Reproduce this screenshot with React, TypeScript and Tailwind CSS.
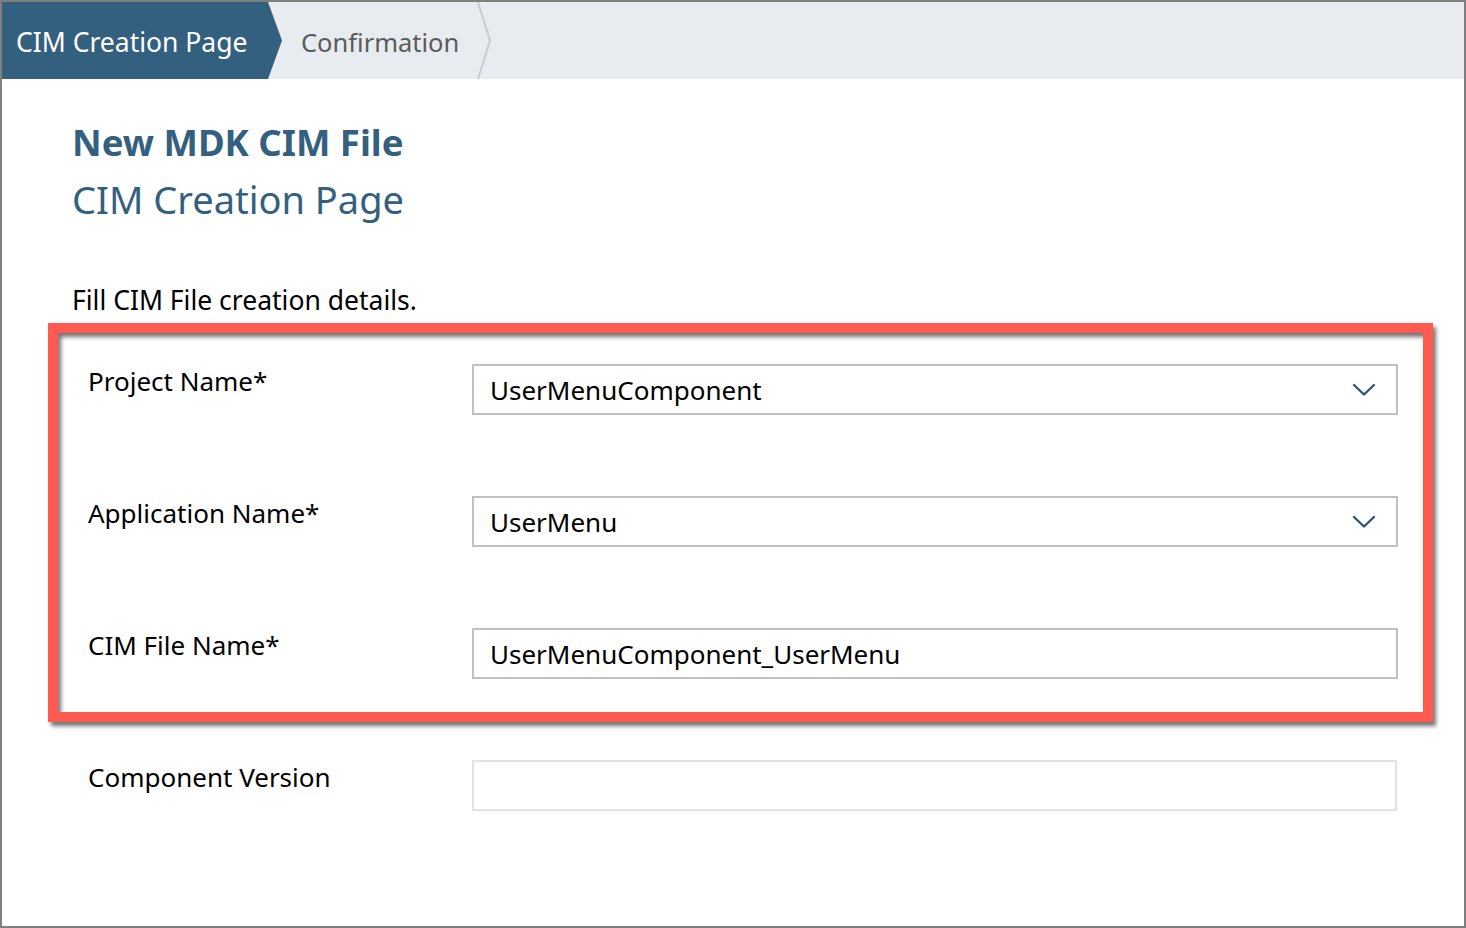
import React from 'react'

const fontStack = { fontFamily: '"Noto Sans", "Liberation Sans", sans-serif' }

function Chevron() {
  return (
    <svg width="24" height="14" viewBox="0 0 24 14" fill="none" className="shrink-0">
      <path d="M2 2 L12 11.5 L22 2" stroke="#2c5578" strokeWidth="2.4" strokeLinecap="round" strokeLinejoin="round" />
    </svg>
  )
}

interface FieldProps {
  label: string;
  value?: string;
  select?: boolean;
  muted?: boolean;
}

function Field({ label, value = '', select = false, muted = false }: FieldProps) {
  return (
    <div className="grid grid-cols-[384px_1fr]">
      <div className="pt-[2px] text-[26px] leading-[30px] text-black">{label}</div>
      <div
        className={
          muted
            ? 'flex h-[51px] items-center border-2 border-[#e2e2e2] bg-white pl-[16px] pr-[20px]'
            : 'flex h-[51px] items-center border-2 border-[#c0c0c0] bg-white pl-[16px] pr-[20px]'
        }
      >
        <span className="flex-1 text-[26px] leading-none text-black">{value}</span>
        {select && <Chevron />}
      </div>
    </div>
  )
}

export default function App() {
  return (
    <div className="h-[928px] w-[1466px] overflow-hidden border-2 border-[#7f7f7f] bg-white" style={fontStack}>
      <div className="flex h-[77px] bg-[#e8ecf0]">
        <div className="flex w-[280px] items-center bg-[#346080] pt-[4px] pl-[14px] text-[26.5px] text-white [clip-path:polygon(0_0,266px_0,100%_50%,266px_100%,0_100%)]">
          CIM Creation Page
        </div>
        <div className="flex items-center pt-[4px] pl-[19px] text-[25.5px] text-[#5b5b5b]">Confirmation</div>
        <svg width="20" height="77" viewBox="0 0 20 77" className="ml-[16px]">
          <path d="M3 0 L15 38.5 L3 77" stroke="#c6ccd2" strokeWidth="2" fill="none" />
        </svg>
      </div>

      <div className="pt-[34px]">
        <div className="pl-[70px] text-[#346080]">
          <h1 className="text-[36.5px] font-bold leading-[58px]">New MDK CIM File</h1>
          <h2 className="-mt-[1px] text-[38px] leading-[58px]">CIM Creation Page</h2>
        </div>
        <p className="mt-[57px] pl-[70px] text-[26.5px] leading-[30px] text-black">Fill CIM File creation details.</p>

        <div className="mt-[8px] ml-[46px] w-[1385px] border-[10px] border-[#ff5a4f] pt-[31px] pr-[25px] pb-[33px] pl-[30px] shadow-[3px_4px_4px_rgba(0,0,0,0.55),inset_3px_4px_4px_rgba(0,0,0,0.55)]">
          <div className="flex flex-col gap-[81px]">
            <Field label="Project Name*" value="UserMenuComponent" select />
            <Field label="Application Name*" value="UserMenu" select />
            <Field label="CIM File Name*" value="UserMenuComponent_UserMenu" />
          </div>
        </div>

        <div className="mt-[38px] ml-[86px] w-[1309px]">
          <Field label="Component Version" muted />
        </div>
      </div>
    </div>
  )
}
